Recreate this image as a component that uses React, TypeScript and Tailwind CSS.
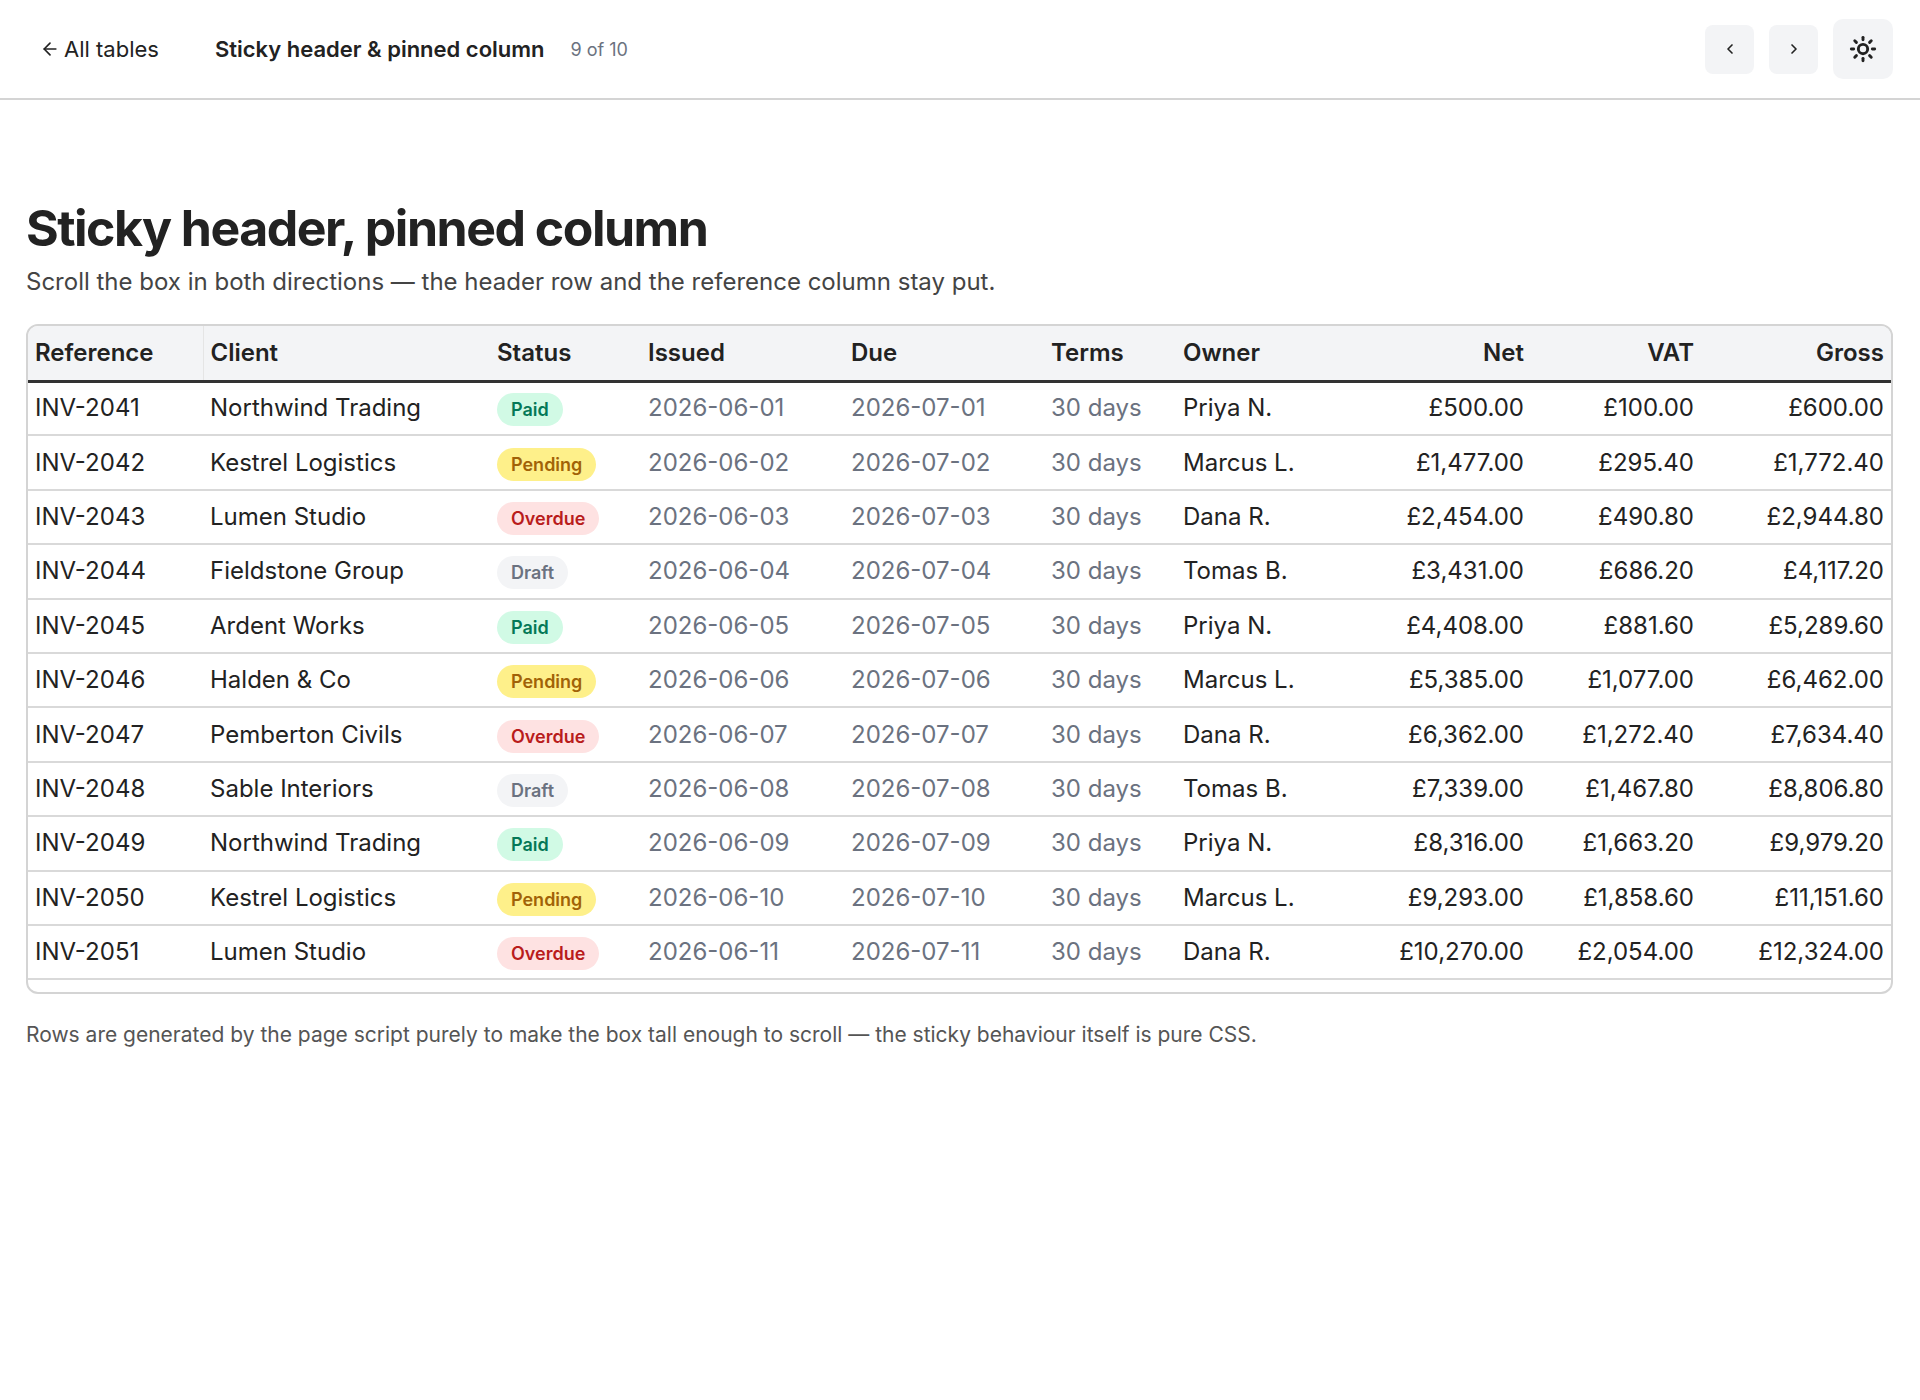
import { ArrowLeft, ChevronLeft, ChevronRight, Sun } from "lucide-react";

const clients = ["Northwind Trading", "Kestrel Logistics", "Lumen Studio", "Fieldstone Group", "Ardent Works", "Halden & Co", "Pemberton Civils", "Sable Interiors"];
const statuses = ["Paid", "Pending", "Overdue", "Draft"];
const owners = ["Priya N.", "Marcus L.", "Dana R.", "Tomas B."];

const badge: Record<string, string> = {
  Paid: "bg-[#d1fae5] text-[#047857]",
  Pending: "bg-[#fef08a] text-[#a16207]",
  Overdue: "bg-[#fee2e2] text-[#b91c1c]",
  Draft: "bg-[#f3f4f6] text-[#6b7280]",
};

const gbp = (n: number) =>
  "£" + n.toLocaleString("en-GB", { minimumFractionDigits: 2, maximumFractionDigits: 2 });

const rows = Array.from({ length: 11 }, (_, i) => {
  const net = 500 + i * 977;
  const d = String(i + 1).padStart(2, "0");
  return {
    ref: `INV-${2041 + i}`,
    client: clients[i % 8],
    status: statuses[i % 4],
    issued: `2026-06-${d}`,
    due: `2026-07-${d}`,
    owner: owners[i % 4],
    net,
    vat: net * 0.2,
    gross: net * 1.2,
  };
});

export default function App() {
  return (
    <div className="min-h-screen bg-white text-[#222] font-[family-name:Inter,Liberation_Sans,sans-serif]">
      <header className="h-[100px] border-b-2 border-[#d4d4d4] flex items-center px-[40px]">
        <a className="flex items-center gap-1 text-[22px] text-[#222]">
          <ArrowLeft className="w-5 h-5" strokeWidth={2} />
          All tables
        </a>
        <div className="ml-[56px] text-[22px] font-semibold">Sticky header &amp; pinned column</div>
        <div className="ml-[26px] text-[18px] text-[#6b7280]">9 of 10</div>
        <div className="ml-auto flex items-center gap-[15px] mr-[-13px]">
          <button className="w-[49px] h-[49px] rounded-[8px] bg-[#f3f4f6] flex items-center justify-center">
            <ChevronLeft className="w-4 h-4" strokeWidth={2.5} />
          </button>
          <button className="w-[49px] h-[49px] rounded-[8px] bg-[#f3f4f6] flex items-center justify-center">
            <ChevronRight className="w-4 h-4" strokeWidth={2.5} />
          </button>
          <button className="w-[60px] h-[60px] rounded-[10px] bg-[#f3f4f6] flex items-center justify-center">
            <Sun className="w-7 h-7" strokeWidth={2.5} />
          </button>
        </div>
      </header>

      <main className="px-[26px] pt-[100px]">
        <h1 className="text-[50px] font-bold tracking-[-1.5px] leading-[56px] text-[#222]">Sticky header, pinned column</h1>
        <p className="mt-[8px] text-[24px] text-[#444]">
          Scroll the box in both directions — the header row and the reference column stay put.
        </p>

        <div className="mt-[24px] border-2 border-[#d4d4d4] rounded-[12px] overflow-hidden pb-[12px] w-[1867px]">
          <table className="w-full table-fixed border-collapse text-[24px]">
            <colgroup>
              <col className="w-[175px]" />
              <col className="w-[287px]" />
              <col className="w-[151px]" />
              <col className="w-[203px]" />
              <col className="w-[200px]" />
              <col className="w-[132px]" />
              <col className="w-[165px]" />
              <col className="w-[190px]" />
              <col className="w-[170px]" />
              <col />
            </colgroup>
            <thead>
              <tr className="bg-[#f3f4f6] h-[55px] border-b-[3px] border-[#333]">
                {["Reference", "Client", "Status", "Issued", "Due", "Terms", "Owner", "Net", "VAT", "Gross"].map((h, i) => (
                  <th
                    key={h}
                    className={`px-[7px] font-semibold ${i >= 7 ? "text-right" : "text-left"} ${i === 0 ? "border-r border-[#e5e5e5]" : ""}`}
                  >
                    {h}
                  </th>
                ))}
              </tr>
            </thead>
            <tbody>
              {rows.map((r) => (
                <tr key={r.ref} className="h-[54.4px] border-b-2 border-[#d9d9d9]">
                  <td className="px-[7px]">{r.ref}</td>
                  <td className="px-[7px]">{r.client}</td>
                  <td className="px-[7px]">
                    <span className={`inline-block rounded-full px-[14px] py-[3px] text-[18px] font-semibold ${badge[r.status]}`}>
                      {r.status}
                    </span>
                  </td>
                  <td className="px-[7px] text-[#6b7280]">{r.issued}</td>
                  <td className="px-[7px] text-[#6b7280]">{r.due}</td>
                  <td className="px-[7px] text-[#6b7280]">30 days</td>
                  <td className="px-[7px]">{r.owner}</td>
                  <td className="px-[7px] text-right">{gbp(r.net)}</td>
                  <td className="px-[7px] text-right">{gbp(r.vat)}</td>
                  <td className="px-[7px] text-right">{gbp(r.gross)}</td>
                </tr>
              ))}
            </tbody>
          </table>
        </div>

        <p className="mt-[25px] text-[21px] text-[#555]">
          Rows are generated by the page script purely to make the box tall enough to scroll — the sticky behaviour itself is pure CSS.
        </p>
      </main>
    </div>
  );
}
